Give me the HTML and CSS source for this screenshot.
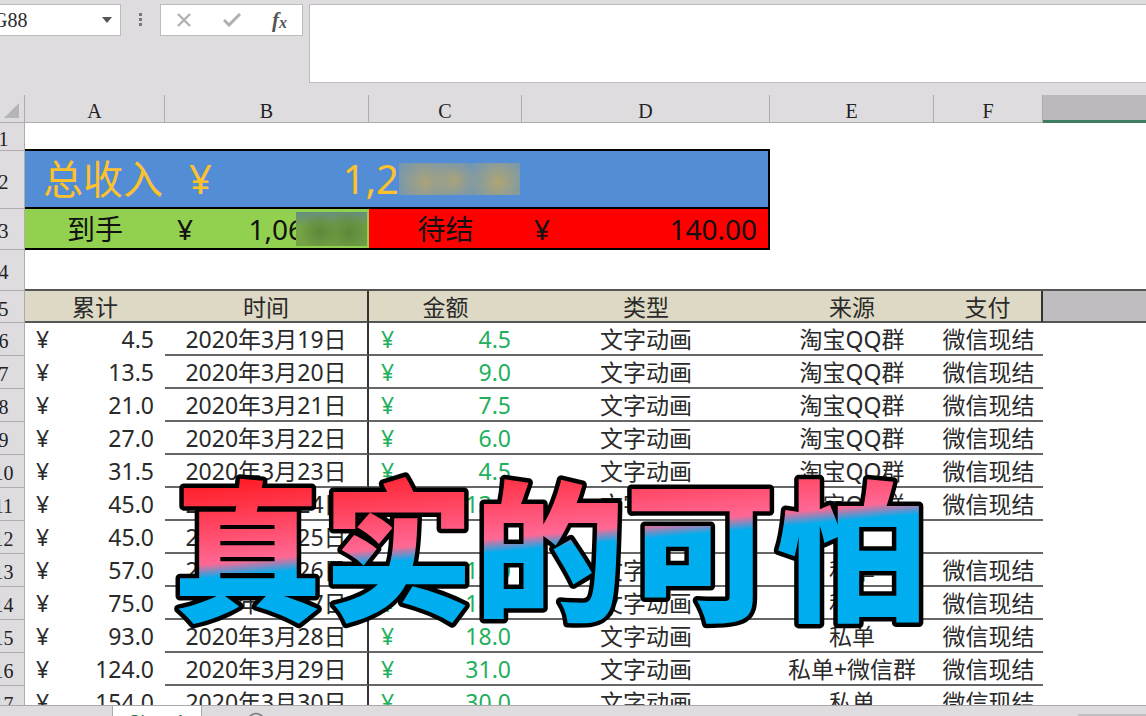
FILE: index.html
```html
<!DOCTYPE html>
<html lang="zh-CN">
<head>
<meta charset="utf-8">
<title>Sheet1</title>
<link rel="stylesheet" href="styles.css">
</head>
<body>
<header class="formula-bar">
  <div class="name-box">
    <input class="name-input" type="text" value="G88" aria-label="名称框">
    <button class="name-arrow" type="button" aria-label="展开名称框"><svg width="10" height="6" viewBox="0 0 10 6"><path d="M0 0H10L5 6Z" fill="#555"/></svg></button>
  </div>
  <svg class="grip" width="4" height="14" viewBox="0 0 4 14"><path d="M0 0h3v3H0zM0 5h3v3H0zM0 10h3v3H0z" fill="#777"/></svg>
  <div class="actions">
    <button type="button" aria-label="取消"><svg width="16" height="14" viewBox="0 0 16 14"><path d="M2 1L14 13M14 1L2 13" stroke="#b0b0b0" stroke-width="2.4" fill="none"/></svg></button>
    <button type="button" aria-label="输入"><svg width="18" height="14" viewBox="0 0 18 14"><path d="M1 7L6 12L17 1" stroke="#b0b0b0" stroke-width="3" fill="none"/></svg></button>
    <button type="button" class="fx" aria-label="插入函数">f<span>x</span></button>
  </div>
  <textarea class="formula" aria-label="编辑栏"></textarea>
</header>

<main class="sheet">
<table class="grid">
  <colgroup><col class="c-row"><col class="c-a"><col class="c-b"><col class="c-c"><col class="c-d"><col class="c-e"><col class="c-f"><col></colgroup>
  <thead>
    <tr><th class="corner"><svg width="15" height="15" viewBox="0 0 15 15"><path d="M15 0V15H0Z" fill="#b5b4b6"/></svg></th><th>A</th><th>B</th><th>C</th><th>D</th><th>E</th><th>F</th><th class="selected"></th></tr>
  </thead>
  <tbody>
    <tr class="r1"><th>1</th><td class="thick"></td><td class="thick"></td><td class="thick"></td><td class="thick"></td><td></td><td></td><td></td></tr>
    <tr class="r2"><th>2</th><td class="total">总收入</td><td colspan="2"><div class="money"><span>¥</span><span class="amount">1,2<i class="mask gold"></i></span></div></td><td class="edge"></td><td class="plain"></td><td class="plain"></td><td class="plain"></td></tr>
    <tr class="r3"><th>3</th><td class="got">到手</td><td class="got"><div class="money"><span>¥</span><span class="amount">1,06<i class="mask green"></i></span></div></td><td class="due">待结</td><td class="due edge"><div class="money"><span>¥</span><span>140.00</span></div></td><td class="plain"></td><td class="plain"></td><td class="plain"></td></tr>
    <tr class="r4"><th>4</th><td></td><td></td><td></td><td></td><td></td><td></td><td></td></tr>
    <tr class="titles"><th>5</th><td>累计</td><td class="rule">时间</td><td>金额</td><td>类型</td><td>来源</td><td class="rule">支付</td><td class="filled"></td></tr>
    <tr class="row"><th>6</th><td><div class="money"><span>¥</span><span>4.5</span></div></td><td>2020年3月19日</td><td><div class="money"><span>¥</span><span>4.5</span></div></td><td>文字动画</td><td>淘宝QQ群</td><td>微信现结</td><td></td></tr>
    <tr class="row"><th>7</th><td><div class="money"><span>¥</span><span>13.5</span></div></td><td>2020年3月20日</td><td><div class="money"><span>¥</span><span>9.0</span></div></td><td>文字动画</td><td>淘宝QQ群</td><td>微信现结</td><td></td></tr>
    <tr class="row"><th>8</th><td><div class="money"><span>¥</span><span>21.0</span></div></td><td>2020年3月21日</td><td><div class="money"><span>¥</span><span>7.5</span></div></td><td>文字动画</td><td>淘宝QQ群</td><td>微信现结</td><td></td></tr>
    <tr class="row"><th>9</th><td><div class="money"><span>¥</span><span>27.0</span></div></td><td>2020年3月22日</td><td><div class="money"><span>¥</span><span>6.0</span></div></td><td>文字动画</td><td>淘宝QQ群</td><td>微信现结</td><td></td></tr>
    <tr class="row"><th>10</th><td><div class="money"><span>¥</span><span>31.5</span></div></td><td>2020年3月23日</td><td><div class="money"><span>¥</span><span>4.5</span></div></td><td>文字动画</td><td>淘宝QQ群</td><td>微信现结</td><td></td></tr>
    <tr class="row"><th>11</th><td><div class="money"><span>¥</span><span>45.0</span></div></td><td>2020年3月24日</td><td><div class="money"><span>¥</span><span>13.5</span></div></td><td>文字动画</td><td>淘宝QQ群</td><td>微信现结</td><td></td></tr>
    <tr class="row"><th>12</th><td><div class="money"><span>¥</span><span>45.0</span></div></td><td>2020年3月25日</td><td></td><td></td><td></td><td></td><td></td></tr>
    <tr class="row"><th>13</th><td><div class="money"><span>¥</span><span>57.0</span></div></td><td>2020年3月26日</td><td><div class="money"><span>¥</span><span>12.0</span></div></td><td>文字动画</td><td>私单</td><td>微信现结</td><td></td></tr>
    <tr class="row"><th>14</th><td><div class="money"><span>¥</span><span>75.0</span></div></td><td>2020年3月27日</td><td><div class="money"><span>¥</span><span>18.0</span></div></td><td>文字动画</td><td>私单</td><td>微信现结</td><td></td></tr>
    <tr class="row"><th>15</th><td><div class="money"><span>¥</span><span>93.0</span></div></td><td>2020年3月28日</td><td><div class="money"><span>¥</span><span>18.0</span></div></td><td>文字动画</td><td>私单</td><td>微信现结</td><td></td></tr>
    <tr class="row"><th>16</th><td><div class="money"><span>¥</span><span>124.0</span></div></td><td>2020年3月29日</td><td><div class="money"><span>¥</span><span>31.0</span></div></td><td>文字动画</td><td>私单+微信群</td><td>微信现结</td><td></td></tr>
    <tr class="row"><th>17</th><td><div class="money"><span>¥</span><span>154.0</span></div></td><td>2020年3月30日</td><td><div class="money"><span>¥</span><span>30.0</span></div></td><td>文字动画</td><td>私单</td><td>微信现结</td><td></td></tr>
  </tbody>
</table>
</main>

<footer class="tabs">
  <button class="tab" type="button">Sheet1</button>
  <button class="add" type="button" aria-label="新工作表"><svg width="20" height="20" viewBox="0 0 20 20"><circle cx="10" cy="10" r="8.5" fill="none" stroke="#777" stroke-width="1.6"/><path d="M10 5V15M5 10H15" stroke="#777" stroke-width="1.6"/></svg></button>
  <div class="scrollbar"></div>
</footer>

<svg class="caption" width="800" height="180" viewBox="0 0 800 180">
  <defs>
    <linearGradient id="fade" gradientUnits="userSpaceOnUse" x1="20" y1="12" x2="29" y2="112">
      <stop offset="0" stop-color="#ff1a22"/>
      <stop offset="0.84" stop-color="#ff6894"/>
      <stop offset="0.98" stop-color="#00aeef"/>
    </linearGradient>
  </defs>
  <text x="12" y="139" fill="url(#fade)">真实的可怕</text>
</svg>
</body>
</html>
```

FILE: styles.css
```css
* { box-sizing: border-box; }

body {
  margin: 0;
  height: 100vh;
  overflow: hidden;
  position: relative;
  display: flex;
  flex-direction: column;
  background: #dedcdf;
  color: #2a2a2a;
  font: 400 23px/30px "Noto Sans", "Noto Sans CJK SC", sans-serif;
}

button, input, textarea {
  margin: 0;
  padding: 0;
  border: 0;
  background: none;
  font: inherit;
  color: inherit;
}

/* Formula bar */
.formula-bar {
  flex: none;
  display: flex;
  align-items: flex-start;
  height: 95px;
  padding-top: 4px;
}

.name-box, .actions {
  display: flex;
  align-items: center;
  height: 32px;
  border: 1px solid #bdbbbe;
  background: #fff;
}

.name-box {
  width: 141px;
  margin-left: -20px;
  padding: 0 8px 0 12px;
}

.name-input {
  flex: 1;
  min-width: 0;
  font: 20px/28px "Liberation Serif", serif;
}

.name-arrow { display: flex; }
.grip { margin: 9px 17px 0 18px; }

.actions {
  width: 143px;
  justify-content: space-between;
  padding: 0 15px;
}

.actions button {
  display: flex;
  align-items: center;
}

.fx {
  font: italic bold 21px/24px "Liberation Serif", serif;
  color: #555;
}

.fx span {
  font-size: 16px;
  padding-top: 6px;
}

.formula {
  flex: 1;
  height: 79px;
  margin-left: 6px;
  border: 1px solid #bdbbbe;
  border-right: 0;
  background: #fff;
  resize: none;
}

/* Sheet */
.sheet {
  flex: 1;
  min-height: 0;
  overflow: hidden;
  margin-left: -20px;
  background: linear-gradient(#dedcdf 27px, #fff 27px);
}

.grid {
  width: 100%;
  table-layout: fixed;
  border-collapse: separate;
  border-spacing: 0;
}

.c-row { width: 45px; }
.c-a { width: 140px; }
.c-b { width: 204px; }
.c-c { width: 153px; }
.c-d { width: 248px; }
.c-e { width: 164px; }
.c-f { width: 109px; }

.grid th, .grid td {
  padding: 0;
  text-align: center;
  white-space: nowrap;
}

.grid th {
  background: #dedcdf;
  border: solid #aeacaf;
  border-width: 0 1px 1px 0;
  font: 20px/22px "Liberation Serif", serif;
  color: #222;
}

.grid thead th {
  height: 28px;
  padding-top: 4px;
}

.grid thead .corner {
  padding: 4px 5px 0 0;
  text-align: right;
  line-height: 0;
}

.grid thead .selected {
  background: #bbb9bc;
  border-width: 0 0 3px;
  border-color: #3f7f60;
}

.grid tbody th { padding: 4px 0 0 3px; }

.r1 { height: 28px; }
.grid .thick { border-bottom: 2px solid #000; }

.r2 {
  height: 58px;
  font-size: 40px;
  line-height: 50px;
}

.r2 td {
  background: #538dd5;
  color: #fdc12d;
  border-bottom: 2px solid #000;
}

.grid .total { padding-left: 16px; }

.r3 {
  height: 41px;
  font-size: 28px;
  line-height: 36px;
  color: #111;
}

.r3 td { border-bottom: 2px solid #000; }
.r3 .got { background: #92d050; }
.r3 .due { background: #f00; }
.grid .edge { border-right: 2px solid #000; }

.grid .plain {
  background: #fff;
  border: 0;
}

.r4 { height: 41px; }
.r4 td { border-bottom: 2px solid #555; }

.titles { height: 32px; }

.titles td {
  padding-top: 2px;
  line-height: 28px;
  background: #ddd9c4;
  border-bottom: 2px solid #555;
}

.titles .rule { border-right: 2px solid #333; }
.titles .filled { background: #bfbdc0; }

.row { height: 33px; }
.row td { border-bottom: 2px solid #666; }
.row td:nth-child(2), .row td:nth-child(8) { border-color: transparent; }
.row td:nth-child(3) { border-right: 2px solid #333; }
.row td:nth-child(4) { color: #22b05c; }

.money {
  display: flex;
  justify-content: space-between;
  padding: 0 11px;
}

.row td:nth-child(4) .money { padding-left: 12px; }
.r2 .money { padding: 0 2px 0 24px; }
.r3 .money { padding-left: 12px; }

.amount {
  display: flex;
  align-items: center;
}

.r3 .got .money { padding-right: 2px; }

.mask { flex: none; }

.gold {
  width: 121px;
  height: 32px;
  background:
    radial-gradient(circle at 22% 60%, #aaa37a 0, transparent 34%),
    radial-gradient(circle at 46% 55%, #aaa37a 0, transparent 34%),
    radial-gradient(circle at 82% 60%, #b0a574 0, transparent 32%),
    #6f96b4;
}

.green {
  width: 71px;
  height: 34px;
  margin-left: -8px;
  background:
    radial-gradient(circle at 34% 60%, #5c883a 0, transparent 38%),
    radial-gradient(circle at 75% 60%, #5c883a 0, transparent 40%),
    linear-gradient(#668e80, #74a245 45%);
}

/* Sheet tabs */
.tabs {
  flex: none;
  display: flex;
  align-items: flex-start;
  height: 11px;
  overflow: hidden;
  border-top: 1px solid #aaa8ab;
  background: #dedcdf;
}

.tab {
  width: 90px;
  height: 34px;
  margin: -1px 0 0 112px;
  border: solid #aaa8ab;
  border-width: 0 1px;
  background: #fff;
  color: #217346;
  font: 18px/34px "Liberation Sans", sans-serif;
}

.add {
  display: flex;
  margin: 6px 0 0 44px;
}

.scrollbar {
  width: 68px;
  height: 20px;
  margin: 8px 0 0 auto;
  background: #c2c0c3;
}

/* Caption laid over the sheet */
.caption {
  position: absolute;
  left: 160px;
  top: 470px;
  pointer-events: none;
}

.caption text {
  font: 900 151px "Noto Sans CJK SC", sans-serif;
  stroke: #000;
  stroke-width: 9px;
  stroke-linejoin: round;
  paint-order: stroke;
}
```
